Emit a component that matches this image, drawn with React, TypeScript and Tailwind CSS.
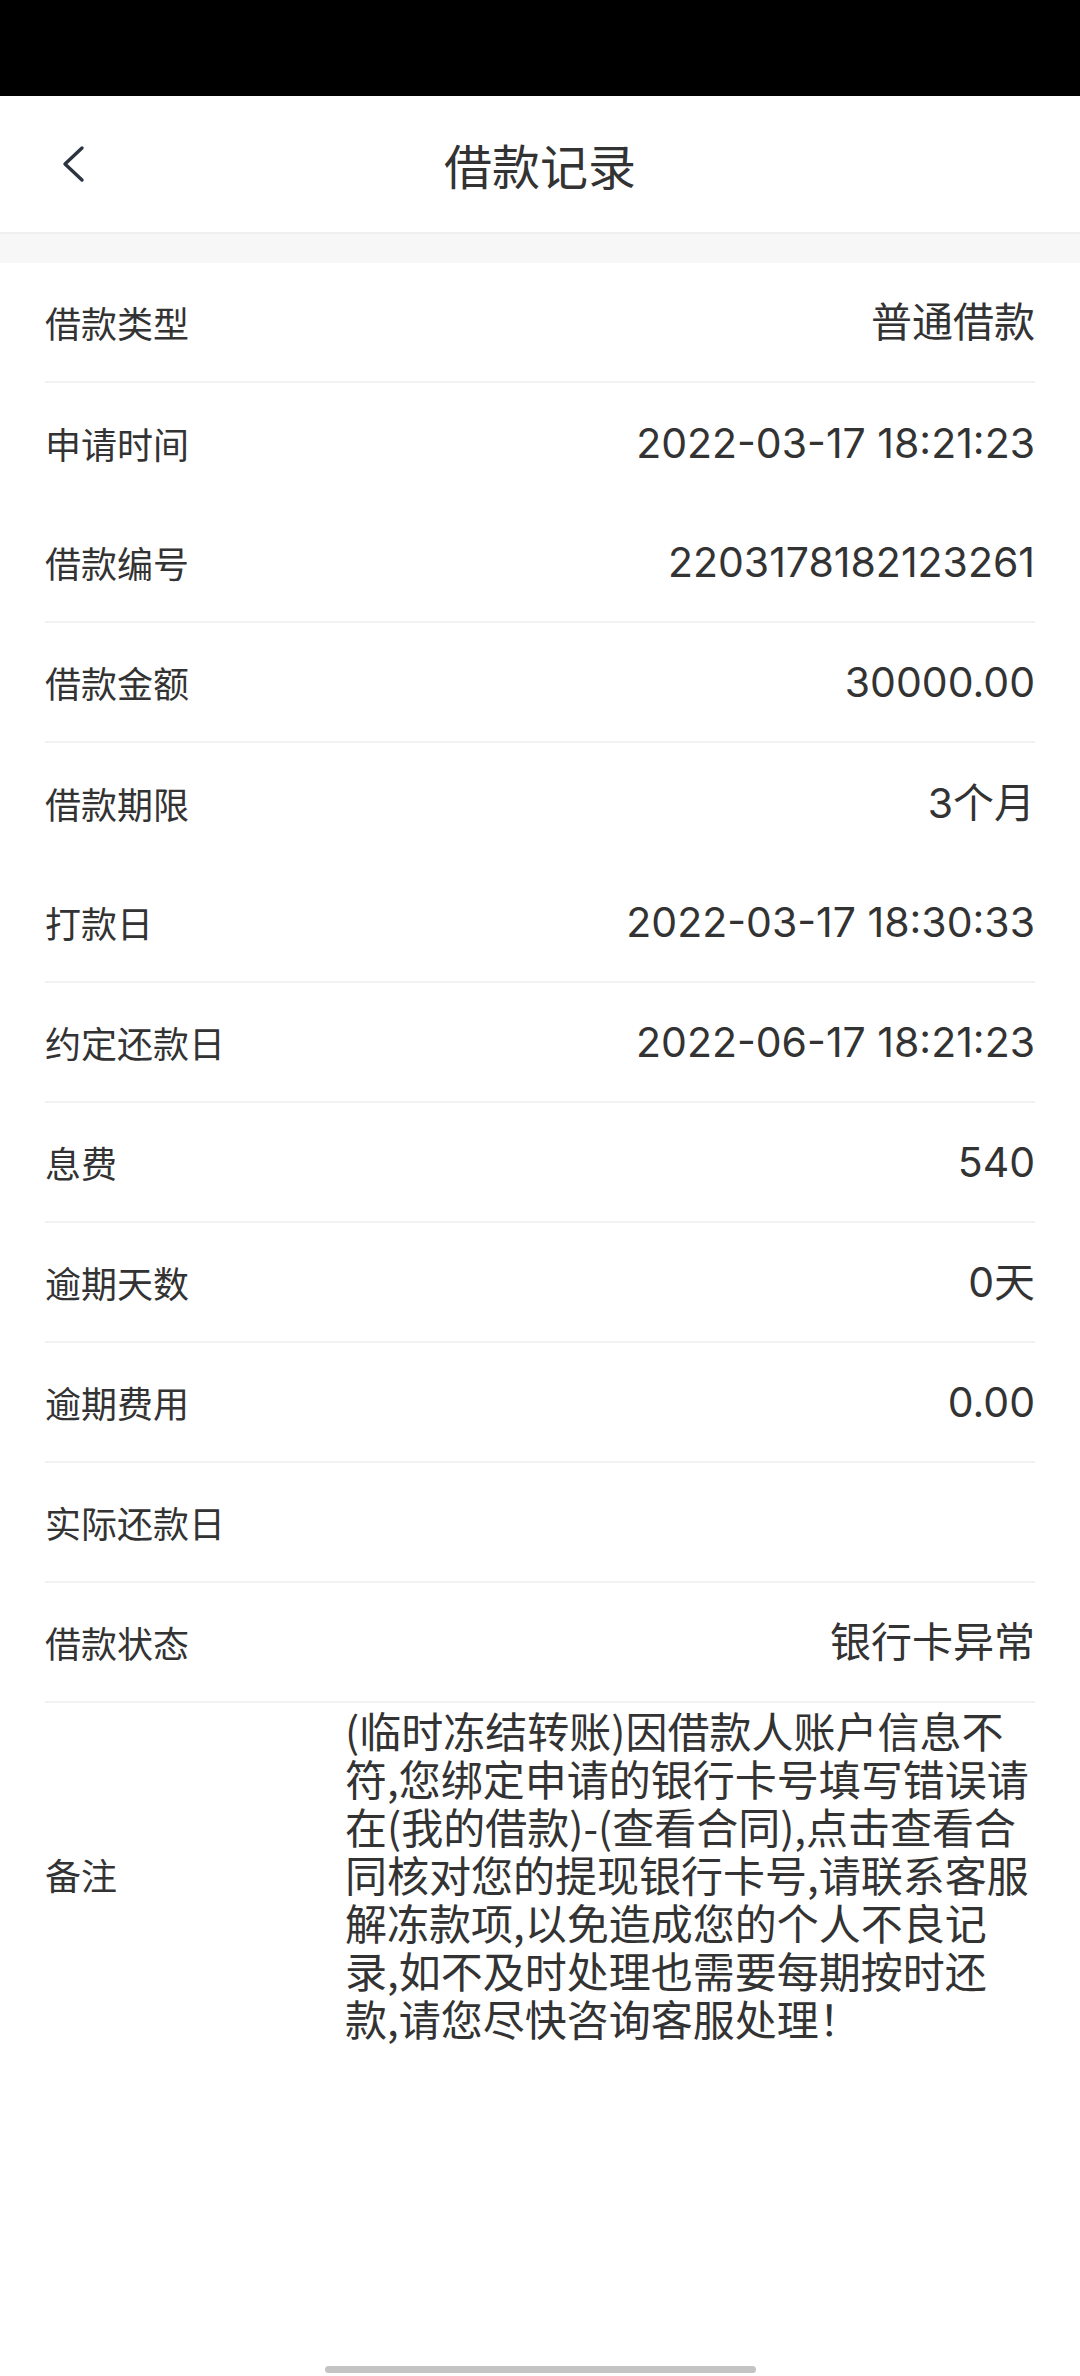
import React from "react";

interface Row {
    label: string;
    value: string;
    divider: boolean;
}

const rows: Row[] = [
    { label: "借款类型", value: "普通借款", divider: true },
    { label: "申请时间", value: "2022-03-17 18:21:23", divider: false },
    { label: "借款编号", value: "2203178182123261", divider: true },
    { label: "借款金额", value: "30000.00", divider: true },
    { label: "借款期限", value: "3个月", divider: false },
    { label: "打款日", value: "2022-03-17 18:30:33", divider: true },
    { label: "约定还款日", value: "2022-06-17 18:21:23", divider: true },
    { label: "息费", value: "540", divider: true },
    { label: "逾期天数", value: "0天", divider: true },
    { label: "逾期费用", value: "0.00", divider: true },
    { label: "实际还款日", value: "", divider: true },
    { label: "借款状态", value: "银行卡异常", divider: true },
];

const remarkLines = [
    "(临时冻结转账)因借款人账户信息不",
    "符,您绑定申请的银行卡号填写错误请",
    "在(我的借款)-(查看合同),点击查看合",
    "同核对您的提现银行卡号,请联系客服",
    "解冻款项,以免造成您的个人不良记",
    "录,如不及时处理也需要每期按时还",
    "款,请您尽快咨询客服处理！",
];

const cjk = "font-['Noto_Sans_CJK_SC',sans-serif]";
const mixed = "font-['Inter','Noto_Sans_CJK_SC',sans-serif]";

const App = () => {
    return (
        <div className={`w-[1080px] h-[2376px] bg-white flex flex-col ${cjk}`}>
            {/* status bar */}
            <div className="h-[96px] bg-black shrink-0"></div>

            {/* header */}
            <div className="h-[136px] grid grid-cols-[1fr_auto_1fr] items-center shrink-0">
                <div className="pl-[61px] flex items-center">
                    <svg width="24" height="38" viewBox="0 0 24 38" fill="none">
                        <path d="M21 3 L4 19 L21 35" stroke="#2b3440" strokeWidth="3.4" strokeLinecap="round" strokeLinejoin="round" />
                    </svg>
                </div>
                <h1 className="text-[48px] leading-none text-[#333] font-normal">借款记录</h1>
                <div></div>
            </div>

            <div className="h-[31px] bg-[#f7f7f7] border-t-2 border-[#efefef] shrink-0"></div>

            {/* detail rows */}
            <div className="px-[45px]">
                {rows.map((row) => (
                    <div
                        key={row.label}
                        className={`h-[120px] flex items-center justify-between ${row.divider ? "border-b-2 border-[#f2f2f2]" : ""}`}
                    >
                        <span className="text-[36px] leading-none text-[#333]">{row.label}</span>
                        <span className={`text-[41px] leading-none text-[#333] ${mixed}`}>{row.value}</span>
                    </div>
                ))}

                <div className="flex items-center pt-[3px] pb-[6px]">
                    <span className="w-[300px] shrink-0 text-[36px] leading-none text-[#333]">备注</span>
                    <div className="text-[42px] leading-[48px] text-[#333]">
                        {remarkLines.map((line) => (
                            <div key={line} className="whitespace-nowrap">{line}</div>
                        ))}
                    </div>
                </div>
            </div>

            {/* home indicator */}
            <div className="mt-auto mb-[3px] mx-auto w-[431px] h-[7px] rounded-full bg-[#c4c4c4] shrink-0"></div>
        </div>
    );
};

export default App;
